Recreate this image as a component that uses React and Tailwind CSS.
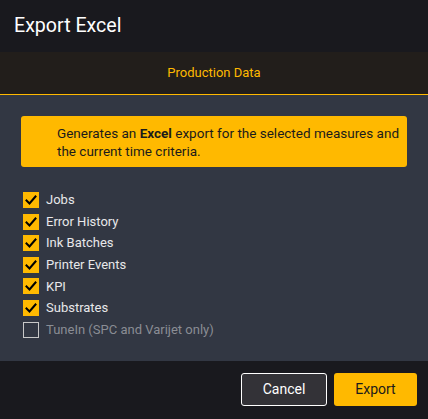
const ITEMS = [
  { label: 'Jobs', checked: true },
  { label: 'Error History', checked: true },
  { label: 'Ink Batches', checked: true },
  { label: 'Printer Events', checked: true },
  { label: 'KPI', checked: true },
  { label: 'Substrates', checked: true },
  { label: 'TuneIn (SPC and Varijet only)', checked: false },
]

function CheckMark() {
  return (
    <svg width="16" height="16" viewBox="0 0 16 16" fill="none">
      <path d="M3.5 8.5 L6.5 11.5 L12.5 4.5" stroke="#000" strokeWidth="2" strokeLinecap="square" />
    </svg>
  )
}

export default function App() {
  return (
    <div
      className="w-[428px] h-[419px] flex flex-col bg-[#19191e] overflow-hidden"
      style={{ fontFamily: 'Roboto, "Liberation Sans", sans-serif' }}
    >
      {/* header */}
      <div className="h-[52px] flex items-center px-[14px]">
        <h1 className="text-[19.6px] text-white leading-none">Export Excel</h1>
      </div>

      {/* tab */}
      <div className="h-[43px] bg-[#221e1b] border-b border-[#ffb900] flex items-center justify-center">
        <span className="text-[13px] text-[#ffb900]">Production Data</span>
      </div>

      {/* body */}
      <div className="h-[266px] bg-[#323743] px-[21px] pt-[21px]">
        <div className="h-[51px] bg-[#ffb900] rounded-[3px] pl-[36px] pr-1 flex items-center">
          <p className="text-[13.5px] leading-[18px] text-[#1b1b1b]">
            Generates an <strong className="font-bold">Excel</strong> export for the selected measures and the current time criteria.
          </p>
        </div>

        <div className="mt-[25px] flex flex-col gap-[5.6px] pl-[2px]">
          {ITEMS.map((item) => (
            <label key={item.label} className="flex items-center gap-[7px] h-[16px]">
              {item.checked ? (
                <span className="w-[16px] h-[16px] bg-[#ffb900] flex items-center justify-center">
                  <CheckMark />
                </span>
              ) : (
                <span className="w-[16px] h-[16px] border border-[#c8c8c8]" />
              )}
              <span className={`text-[13px] ${item.checked ? 'text-[#e8e8ea]' : 'text-[#8a8d94]'}`}>
                {item.label}
              </span>
            </label>
          ))}
        </div>
      </div>

      {/* footer */}
      <div className="flex-1 flex items-center justify-end gap-[7px] pr-[11px] pb-[2px]">
        <button className="w-[86px] h-[33px] rounded-[3px] border border-white bg-[#333237] text-[14px] text-white">
          Cancel
        </button>
        <button className="w-[83px] h-[33px] rounded-[3px] bg-[#ffb900] text-[14px] text-[#1b1b1b]">
          Export
        </button>
      </div>
    </div>
  )
}
